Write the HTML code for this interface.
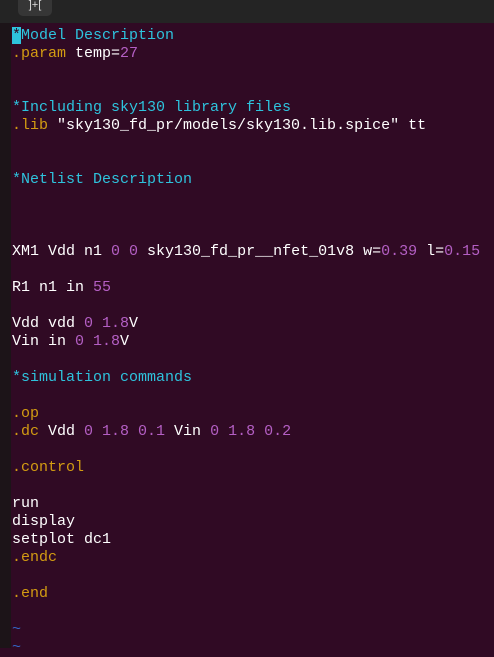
<!DOCTYPE html>
<html><head><style>
body{margin:0;width:494px;height:648px;overflow:hidden;background:#300a24;position:relative;font-family:"Liberation Mono",monospace;}
#top{position:absolute;left:0;top:0;width:494px;height:23px;background:#242424;}
#btn{position:absolute;left:18px;top:-6px;width:34px;height:22px;background:#363636;border-radius:5px;color:#ddd;font-size:11px;text-align:center;line-height:22px;font-family:"Liberation Sans",sans-serif;}
#side{position:absolute;left:0;top:23px;width:11px;height:625px;background:#1c1418;}
pre{position:absolute;left:12px;top:27px;margin:0;font-size:15px;line-height:18px;color:#fff;}
.c{color:#2ec3dd}.o{color:#d39c12}.m{color:#b45fc4}.t{color:#3465c4}
.cur{background:#2ec3dd;color:#300a24}
</style></head><body>
<div id="top"><div id="btn">]+[</div></div>
<div id="side"></div>
<pre><span class="cur">*</span><span class="c">Model Description</span>
<span class="o">.param</span> temp=<span class="m">27</span>


<span class="c">*Including sky130 library files</span>
<span class="o">.lib</span> "sky130_fd_pr/models/sky130.lib.spice" tt


<span class="c">*Netlist Description</span>



XM1 Vdd n1 <span class="m">0 0</span> sky130_fd_pr__nfet_01v8 w=<span class="m">0.39</span> l=<span class="m">0.15</span>

R1 n1 in <span class="m">55</span>

Vdd vdd <span class="m">0 1.8</span>V
Vin in <span class="m">0 1.8</span>V

<span class="c">*simulation commands</span>

<span class="o">.op</span>
<span class="o">.dc</span> Vdd <span class="m">0 1.8 0.1</span> Vin <span class="m">0 1.8 0.2</span>

<span class="o">.control</span>

run
display
setplot dc1
<span class="o">.endc</span>

<span class="o">.end</span>

<span class="t">~</span>
<span class="t">~</span></pre>
</body></html>
